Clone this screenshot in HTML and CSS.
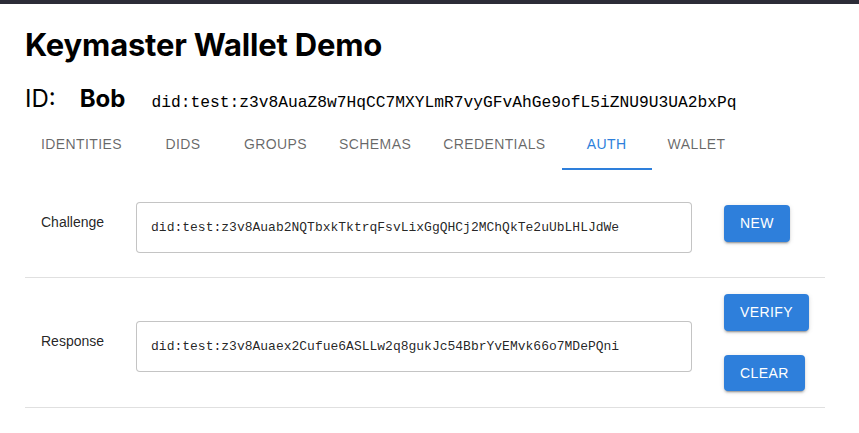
FILE: index.html
```html
<!DOCTYPE html>
<html>
<head>
<meta charset="utf-8">
<link rel="stylesheet" href="styles.css">
</head>
<body>
<div class="topbar"></div>
<div class="page">
  <h1 class="title">Keymaster Wallet Demo</h1>
  <div class="idline">
    <span class="idlabel">ID:</span>
    <span class="idname">Bob</span>
    <span class="iddid">did:test:z3v8AuaZ8w7HqCC7MXYLmR7vyGFvAhGe9ofL5iZNU9U3UA2bxPq</span>
  </div>
  <div class="tabs">
    <div class="tab">Identities</div>
    <div class="tab">DIDs</div>
    <div class="tab">Groups</div>
    <div class="tab">Schemas</div>
    <div class="tab">Credentials</div>
    <div class="tab active">Auth</div>
    <div class="tab">Wallet</div>
  </div>
  <table class="auth">
    <tbody>
      <tr>
        <td class="label">Challenge</td>
        <td class="field"><input class="input" type="text" readonly value="did:test:z3v8Auab2NQTbxkTktrqFsvLixGgQHCj2MChQkTe2uUbLHLJdWe"></td>
        <td class="actions"><div class="btns"><button class="btn">New</button></div></td>
      </tr>
      <tr>
        <td class="label">Response</td>
        <td class="field"><input class="input" type="text" readonly value="did:test:z3v8Auaex2Cufue6ASLLw2q8gukJc54BbrYvEMvk66o7MDePQni"></td>
        <td class="actions"><div class="btns"><button class="btn">Verify</button><button class="btn">Clear</button></div></td>
      </tr>
    </tbody>
  </table>
</div>
</body>
</html>
```
FILE: styles.css
```css
html, body {
  margin: 0;
  padding: 0;
  background: #ffffff;
}
body {
  font-family: "Liberation Sans", Arial, sans-serif;
  color: #000;
}
.topbar {
  height: 4px;
  background: #2c2c37;
}
.page {
  padding: 0 25px;
  width: 800px;
}
.title {
  margin: 22px 0 0 0;
  font-family: Inter, "Liberation Sans", sans-serif;
  font-weight: 700;
  font-size: 31px;
  line-height: 38px;
  letter-spacing: -0.2px;
}
.idline {
  display: flex;
  align-items: baseline;
  margin-top: 21px;
  height: 37px;
}
.idlabel {
  font-family: Inter, "Liberation Sans", sans-serif;
  font-size: 24px;
  line-height: 28px;
}
.idname {
  font-family: Inter, "Liberation Sans", sans-serif;
  font-size: 24px;
  font-weight: 700;
  line-height: 28px;
  margin-left: 24px;
}
.iddid {
  font-family: "Liberation Mono", "Courier New", monospace;
  font-size: 16.25px;
  margin-left: 26px;
}
.tabs {
  display: flex;
  height: 48px;
}
.tab {
  min-width: 90px;
  min-height: 48px;
  box-sizing: border-box;
  padding: 11px 16px 13px 16px;
  display: flex;
  align-items: center;
  justify-content: center;
  font-size: 14px;
  line-height: 1.25;
  letter-spacing: 0.4px;
  text-transform: uppercase;
  color: rgba(0, 0, 0, 0.6);
}
.tab.active {
  color: #2e7fdb;
  box-shadow: inset 0 -2px 0 #2e7fdb;
}
.auth {
  width: 800px;
  border-collapse: collapse;
}
.auth td {
  padding: 16px;
  border-bottom: 1px solid #e0e0e0;
  vertical-align: middle;
}
.auth td.label {
  padding-bottom: 20px;
}
.label {
  font-size: 14px;
  line-height: 20px;
  color: rgba(0, 0, 0, 0.87);
  white-space: nowrap;
}
.field {
  width: 100%;
}
.input {
  display: block;
  width: 100%;
  box-sizing: border-box;
  height: 51px;
  margin: 16px 0 8px 0;
  padding: 0 14px;
  border: 1px solid rgba(0, 0, 0, 0.23);
  border-radius: 4px;
  font-family: "Liberation Mono", "Courier New", monospace;
  font-size: 13px;
  color: rgba(0, 0, 0, 0.87);
  background: #fff;
  outline: none;
}
.actions {
  white-space: nowrap;
}
.btns {
  display: flex;
  flex-direction: column;
  align-items: flex-start;
  gap: 24px;
}
.btn {
  background: #2e7fdb;
  color: #fff;
  border: none;
  border-radius: 4px;
  padding: 6px 16px;
  min-width: 64px;
  font-family: "Liberation Sans", Arial, sans-serif;
  font-size: 14px;
  font-weight: 400;
  line-height: 24.5px;
  letter-spacing: 0.4px;
  text-transform: uppercase;
  box-shadow: 0px 3px 1px -2px rgba(0,0,0,0.2), 0px 2px 2px 0px rgba(0,0,0,0.14), 0px 1px 5px 0px rgba(0,0,0,0.12);
}
```
